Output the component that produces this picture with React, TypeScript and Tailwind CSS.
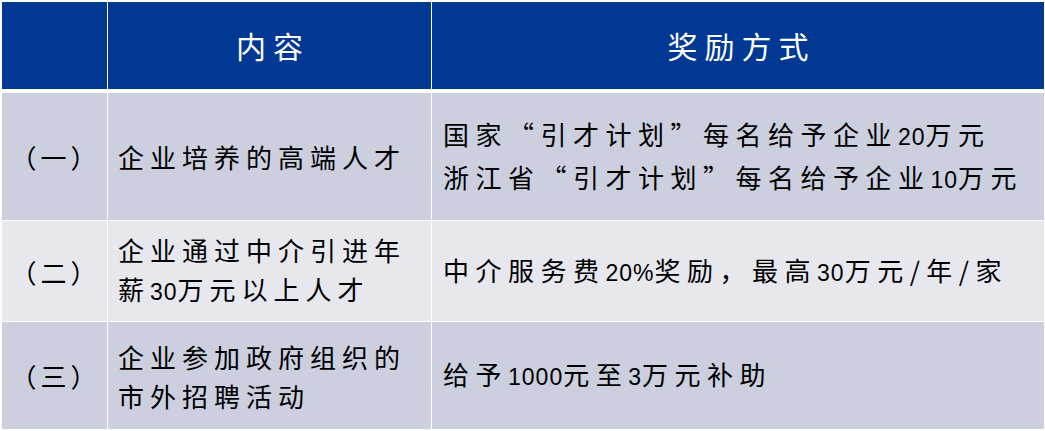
import React from 'react';

const cjk = { fontFamily: '"Noto Sans CJK SC", "Liberation Sans", sans-serif' };
const latin = { fontFamily: '"Liberation Sans", "Noto Sans CJK SC", sans-serif' };

// digits keep their own width, CJK gets the wide spacing
const Txt = ({ text }: { text: string }) => {
    const parts = text.split(/([0-9%]+)/);
    return (
        <>
            {parts.map((p, i) =>
                /^[0-9%]+$/.test(p) ? (
                    <span key={i} className="text-[23px] tracking-[1px]" style={latin}>{p}</span>
                ) : (
                    <span key={i}>{p}</span>
                )
            )}
        </>
    );
};

const rows = [
    { no: '（一）', bg: 'bg-[#cbcfde]', h: 'h-[127px]', item: ['企业培养的高端人才'], reward: ['国家“引才计划”每名给予企业20万元', '浙江省“引才计划”每名给予企业10万元'] },
    { no: '（二）', bg: 'bg-[#e7e8ee]', h: 'h-[100px]', item: ['企业通过中介引进年', '薪30万元以上人才'], reward: ['中介服务费20%奖励，最高30万元/年/家'] },
    { no: '（三）', bg: 'bg-[#cbcfde]', h: 'h-[107px]', item: ['企业参加政府组织的', '市外招聘活动'], reward: ['给予1000元至3万元补助'] },
];

export default function App() {
    return (
        <div className="w-[1045px] h-[431px] bg-white pt-[2px] pl-[2px] overflow-hidden" style={cjk}>
            <div className="grid grid-cols-[105px_323px_612px] gap-x-px">
                <div className="h-[87px] bg-[#003893]" />
                <div className="h-[87px] bg-[#003893] flex items-center justify-center text-white text-[30px] tracking-[7px] pl-[7px]">内容</div>
                <div className="h-[87px] bg-[#003893] flex items-center justify-center text-white text-[30px] tracking-[7px] pl-[7px]">奖励方式</div>
            </div>
            <div className="flex flex-col gap-y-px mt-[4px]">
                {rows.map((r) => (
                    <div key={r.no} className="grid grid-cols-[105px_323px_612px] gap-x-px">
                        <div className={`${r.bg} ${r.h} flex items-center justify-center text-[26px] tracking-[4px] text-black pl-[2px]`}>{r.no}</div>
                        <div className={`${r.bg} ${r.h} flex flex-col justify-center pl-[10px] text-[26px] tracking-[6px] leading-[39px] text-black`}>
                            {r.item.map((t) => <div key={t} className="whitespace-nowrap"><Txt text={t} /></div>)}
                        </div>
                        <div className={`${r.bg} ${r.h} flex flex-col justify-center pl-[11px] text-[26px] tracking-[6.5px] leading-[39px] text-black`}>
                            {r.reward.map((t) => <div key={t} className="whitespace-nowrap"><Txt text={t} /></div>)}
                        </div>
                    </div>
                ))}
            </div>
        </div>
    );
}
